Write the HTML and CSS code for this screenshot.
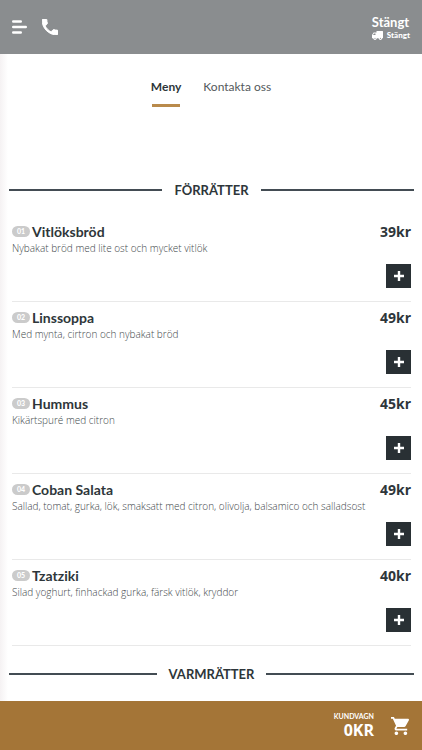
FILE: index.html
```html
<!DOCTYPE html>
<html lang="sv">
<head>
<meta charset="utf-8">
<meta name="viewport" content="width=device-width, initial-scale=1">
<title>Meny</title>
<link rel="stylesheet" href="styles.css">
</head>
<body>
<header class="topbar">
  <div class="topbar-actions">
    <button class="icon-button" type="button" aria-label="Navigering">
      <svg width="15" height="14" viewBox="0 0 15 14" fill="none" stroke="#fff" stroke-width="2.4" stroke-linecap="round"><path d="M1.2 1.5H8.8M1.2 7H13.8M1.2 12.5H8.8"/></svg>
    </button>
    <a class="icon-button" href="#kontakt" aria-label="Ring oss">
      <svg width="16" height="16" viewBox="3 3 18 18" fill="#fff" stroke="#fff" stroke-width="1" stroke-linejoin="round"><path d="M6.62 10.79c1.44 2.83 3.76 5.14 6.59 6.59l2.2-2.2c.27-.27.67-.36 1.02-.24 1.12.37 2.33.57 3.57.57.55 0 1 .45 1 1V20c0 .55-.45 1-1 1-9.39 0-17-7.61-17-17 0-.55.45-1 1-1h3.5c.55 0 1 .45 1 1 0 1.25.2 2.45.57 3.57.11.35.03.74-.25 1.02l-2.2 2.2z"/></svg>
    </a>
  </div>
  <div class="status">
    <strong class="status-main">Stängt</strong>
    <span class="status-delivery">
      <svg width="11" height="9" viewBox="0 0 11 9" fill="#fff"><path d="M4.5 0H10.5Q11 0 11 .5V7.2H0V4L1.6 1.6H4.5ZM2 2.5 1 4.1H3.5V2.5Z" fill-rule="evenodd"/><circle cx="3" cy="7.3" r="1.6"/><circle cx="8.4" cy="7.3" r="1.6"/><g fill="#8a8d8f"><circle cx="3" cy="7.3" r=".6"/><circle cx="8.4" cy="7.3" r=".6"/></g></svg>
      <span>Stängt</span>
    </span>
  </div>
</header>

<nav class="tabs">
  <a class="tab tab-active" href="#meny">Meny</a>
  <a class="tab" href="#kontakt">Kontakta oss</a>
</nav>

<main class="menu" id="meny">
  <h2 class="category">Förrätter</h2>
  <ul class="items">
    <li class="item">
      <div class="item-head"><span class="number">01</span><h3 class="name">Vitlöksbröd</h3><span class="price">39kr</span></div>
      <p class="description">Nybakat bröd med lite ost och mycket vitlök</p>
      <button class="add" type="button" aria-label="Lägg till Vitlöksbröd"><svg width="10" height="10" viewBox="0 0 10 10" stroke="#fff" stroke-width="2.4"><path d="M5 0V10M0 5H10"/></svg></button>
    </li>
    <li class="item">
      <div class="item-head"><span class="number">02</span><h3 class="name">Linssoppa</h3><span class="price">49kr</span></div>
      <p class="description">Med mynta, cirtron och nybakat bröd</p>
      <button class="add" type="button" aria-label="Lägg till Linssoppa"><svg width="10" height="10" viewBox="0 0 10 10" stroke="#fff" stroke-width="2.4"><path d="M5 0V10M0 5H10"/></svg></button>
    </li>
    <li class="item">
      <div class="item-head"><span class="number">03</span><h3 class="name">Hummus</h3><span class="price">45kr</span></div>
      <p class="description">Kikärtspuré med citron</p>
      <button class="add" type="button" aria-label="Lägg till Hummus"><svg width="10" height="10" viewBox="0 0 10 10" stroke="#fff" stroke-width="2.4"><path d="M5 0V10M0 5H10"/></svg></button>
    </li>
    <li class="item">
      <div class="item-head"><span class="number">04</span><h3 class="name">Coban Salata</h3><span class="price">49kr</span></div>
      <p class="description">Sallad, tomat, gurka, lök, smaksatt med citron, olivolja, balsamico och salladsost</p>
      <button class="add" type="button" aria-label="Lägg till Coban Salata"><svg width="10" height="10" viewBox="0 0 10 10" stroke="#fff" stroke-width="2.4"><path d="M5 0V10M0 5H10"/></svg></button>
    </li>
    <li class="item">
      <div class="item-head"><span class="number">05</span><h3 class="name">Tzatziki</h3><span class="price">40kr</span></div>
      <p class="description">Silad yoghurt, finhackad gurka, färsk vitlök, kryddor</p>
      <button class="add" type="button" aria-label="Lägg till Tzatziki"><svg width="10" height="10" viewBox="0 0 10 10" stroke="#fff" stroke-width="2.4"><path d="M5 0V10M0 5H10"/></svg></button>
    </li>
  </ul>
  <h2 class="category">Varmrätter</h2>
</main>

<footer class="cart">
  <div class="cart-total">
    <span class="cart-label">KUNDVAGN</span>
    <strong class="cart-sum">0KR</strong>
  </div>
  <button class="icon-button" type="button" aria-label="Visa kundvagn">
    <svg width="18" height="18" viewBox="1 2 20 20" fill="#fff"><path d="M7 18c-1.1 0-1.99.9-1.99 2S5.9 22 7 22s2-.9 2-2-.9-2-2-2zM1 2v2h2l3.6 7.59-1.35 2.45c-.16.28-.25.61-.25.96 0 1.1.9 2 2 2h12v-2H7.42c-.14 0-.25-.11-.25-.25l.03-.12.9-1.63h7.45c.75 0 1.41-.41 1.75-1.03l3.58-6.49c.08-.14.12-.31.12-.48 0-.55-.45-1-1-1H5.21l-.94-2H1zm16 16c-1.1 0-1.99.9-1.99 2s.89 2 1.99 2 2-.9 2-2-.9-2-2-2z"/></svg>
  </button>
</footer>
</body>
</html>
```

FILE: styles.css
```css
* {
  box-sizing: border-box;
  margin: 0;
  padding: 0;
}

body {
  display: flex;
  flex-direction: column;
  min-height: 100vh;
  background: linear-gradient(90deg, #f5f2f3, #fff 8px);
  color: #2e363a;
  font-family: Lato, "Liberation Sans", sans-serif;
}

button {
  border: 0;
  background: none;
  cursor: pointer;
}

a {
  color: inherit;
  text-decoration: none;
}

svg {
  display: block;
}

.topbar {
  display: flex;
  justify-content: space-between;
  align-items: center;
  height: 54px;
  padding: 0 12px;
  background: #8a8d8f;
  color: #fff;
}

.topbar-actions {
  display: flex;
  align-items: center;
  gap: 15px;
}

.status {
  display: flex;
  flex-direction: column;
}

.status-main {
  font-size: 13px;
  line-height: 16px;
}

.status-delivery {
  display: flex;
  align-items: center;
  gap: 4px;
  font-size: 8px;
  font-weight: 900;
  line-height: 10px;
}

.tabs {
  display: flex;
  justify-content: center;
  gap: 22px;
  padding-top: 24px;
}

.tab {
  display: flex;
  flex-direction: column;
  align-items: center;
  gap: 8px;
  color: #54595c;
  font-size: 12px;
  line-height: 18px;
}

.tab-active {
  color: #2e363a;
  font-weight: 700;
}

.tab-active::after {
  content: "";
  width: 28px;
  height: 3px;
  background: #b98a4b;
}

.menu {
  flex: 1;
  padding-top: 73px;
}

.category {
  display: flex;
  align-items: center;
  gap: 12px;
  padding: 0 8px 0 9px;
  font-size: 13px;
  font-weight: 700;
  line-height: 20px;
  text-transform: uppercase;
}

.category::before,
.category::after {
  content: "";
  flex: 1;
  height: 2px;
  background: #434c53;
}

.items {
  padding: 16px 11px 18px 12px;
  list-style: none;
}

.item {
  display: flex;
  flex-direction: column;
  height: 86px;
  padding: 5px 0 13px;
  border-bottom: 1px solid #e9e9e9;
}

.item-head {
  display: flex;
  align-items: center;
  line-height: 21px;
}

.number {
  width: 18px;
  margin-right: 2px;
  border-radius: 6px;
  background: #cbcbcb;
  color: #fff;
  font-size: 7px;
  font-weight: 900;
  line-height: 11px;
  text-align: center;
}

.name {
  flex: 1;
  font-size: 14px;
  font-weight: 700;
}

.price {
  font-family: "Open Sans", sans-serif;
  font-size: 14px;
  font-weight: 700;
}

.description {
  color: #42484b;
  font-family: "Open Sans", sans-serif;
  font-size: 10px;
  font-weight: 300;
  line-height: 13px;
}

.add {
  display: grid;
  place-items: center;
  width: 25px;
  height: 24px;
  margin-top: auto;
  margin-left: auto;
  background: #293034;
}

.cart {
  position: sticky;
  bottom: 0;
  display: flex;
  justify-content: flex-end;
  align-items: center;
  gap: 17px;
  height: 49px;
  padding: 0 13px;
  background: #a47537;
  color: #fff;
}

.cart-total {
  display: flex;
  flex-direction: column;
  align-items: flex-end;
}

.cart-label {
  font-size: 7px;
  font-weight: 700;
  line-height: 9px;
}

.cart-sum {
  font-family: "Open Sans", sans-serif;
  font-size: 16px;
  font-weight: 700;
  line-height: 18px;
}
```
